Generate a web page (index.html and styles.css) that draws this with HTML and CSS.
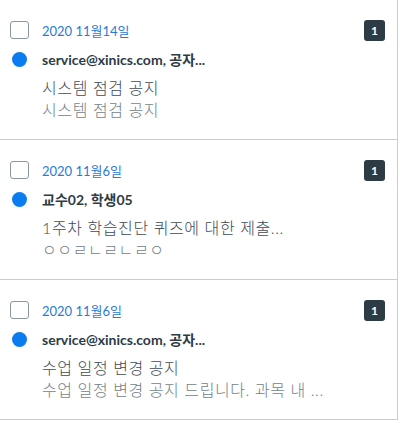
FILE: index.html
```html
<!DOCTYPE html>
<html>

<head>
    <meta name="viewport" content="width=device-width, initial-scale=1">
    <meta charset="utf-8">
    <link rel="stylesheet" href="styles.css">
</head>

<body>

    <div class="list">
        <div class="item">
            <div class="top">
                <span class="check"></span>
                <span class="date">2020 11월14일</span>
                <span class="badge">1</span>
            </div>
            <div class="from">
                <span class="dot"></span>
                <span class="sender">service@xinics.com, 공자...</span>
            </div>
            <div class="subject">시스템 점검 공지</div>
            <div class="preview">시스템 점검 공지</div>
        </div>

        <div class="item">
            <div class="top">
                <span class="check"></span>
                <span class="date">2020 11월6일</span>
                <span class="badge">1</span>
            </div>
            <div class="from">
                <span class="dot"></span>
                <span class="sender">교수02, 학생05</span>
            </div>
            <div class="subject">1주차 학습진단 퀴즈에 대한 제출...</div>
            <div class="preview">ㅇㅇㄹㄴㄹㄴㄹㅇ</div>
        </div>

        <div class="item">
            <div class="top">
                <span class="check"></span>
                <span class="date">2020 11월6일</span>
                <span class="badge">1</span>
            </div>
            <div class="from">
                <span class="dot"></span>
                <span class="sender">service@xinics.com, 공자...</span>
            </div>
            <div class="subject">수업 일정 변경 공지</div>
            <div class="preview">수업 일정 변경 공지 드립니다. 과목 내 ...</div>
        </div>
    </div>

</body>

</html>
```

FILE: styles.css
```css
* {
    box-sizing: border-box;
}

body {
    margin: 0;
    font-family: Lato, "Noto Sans CJK KR", sans-serif;
    color: #2d3b45;
    background: white;
}

.list {
    width: 398px;
    border-right: 1px solid #c7cdd1;
}

.item {
    height: 140px;
    padding: 19px 12px 0 10px;
    border-bottom: 1px solid #c7cdd1;
}

.top {
    display: flex;
    align-items: center;
    height: 22px;
}

.check {
    width: 19px;
    height: 18px;
    border: 1px solid #8b969e;
    border-radius: 3px;
    margin-right: 13px;
}

.date {
    flex: 1;
    font-size: 13px;
    color: #2b7ad4;
}

.badge {
    width: 21px;
    height: 21px;
    border-radius: 3px;
    background: #2d3b45;
    color: white;
    font-size: 12px;
    font-weight: bold;
    display: flex;
    align-items: center;
    justify-content: center;
}

.from {
    display: flex;
    align-items: center;
    height: 18px;
    margin-top: 9px;
}

.dot {
    width: 15px;
    height: 15px;
    border-radius: 50%;
    background: #0b7cf0;
    margin: 0 15px 0 2px;
}

.sender {
    font-size: 14px;
    font-weight: bold;
}

.subject,
.preview {
    padding-left: 32px;
    font-size: 16px;
    font-weight: 300;
    letter-spacing: 0.6px;
    line-height: 20px;
}

.subject {
    margin-top: 10px;
    color: #3f4b55;
}

.preview {
    margin-top: 2px;
    color: #737f88;
}
```
